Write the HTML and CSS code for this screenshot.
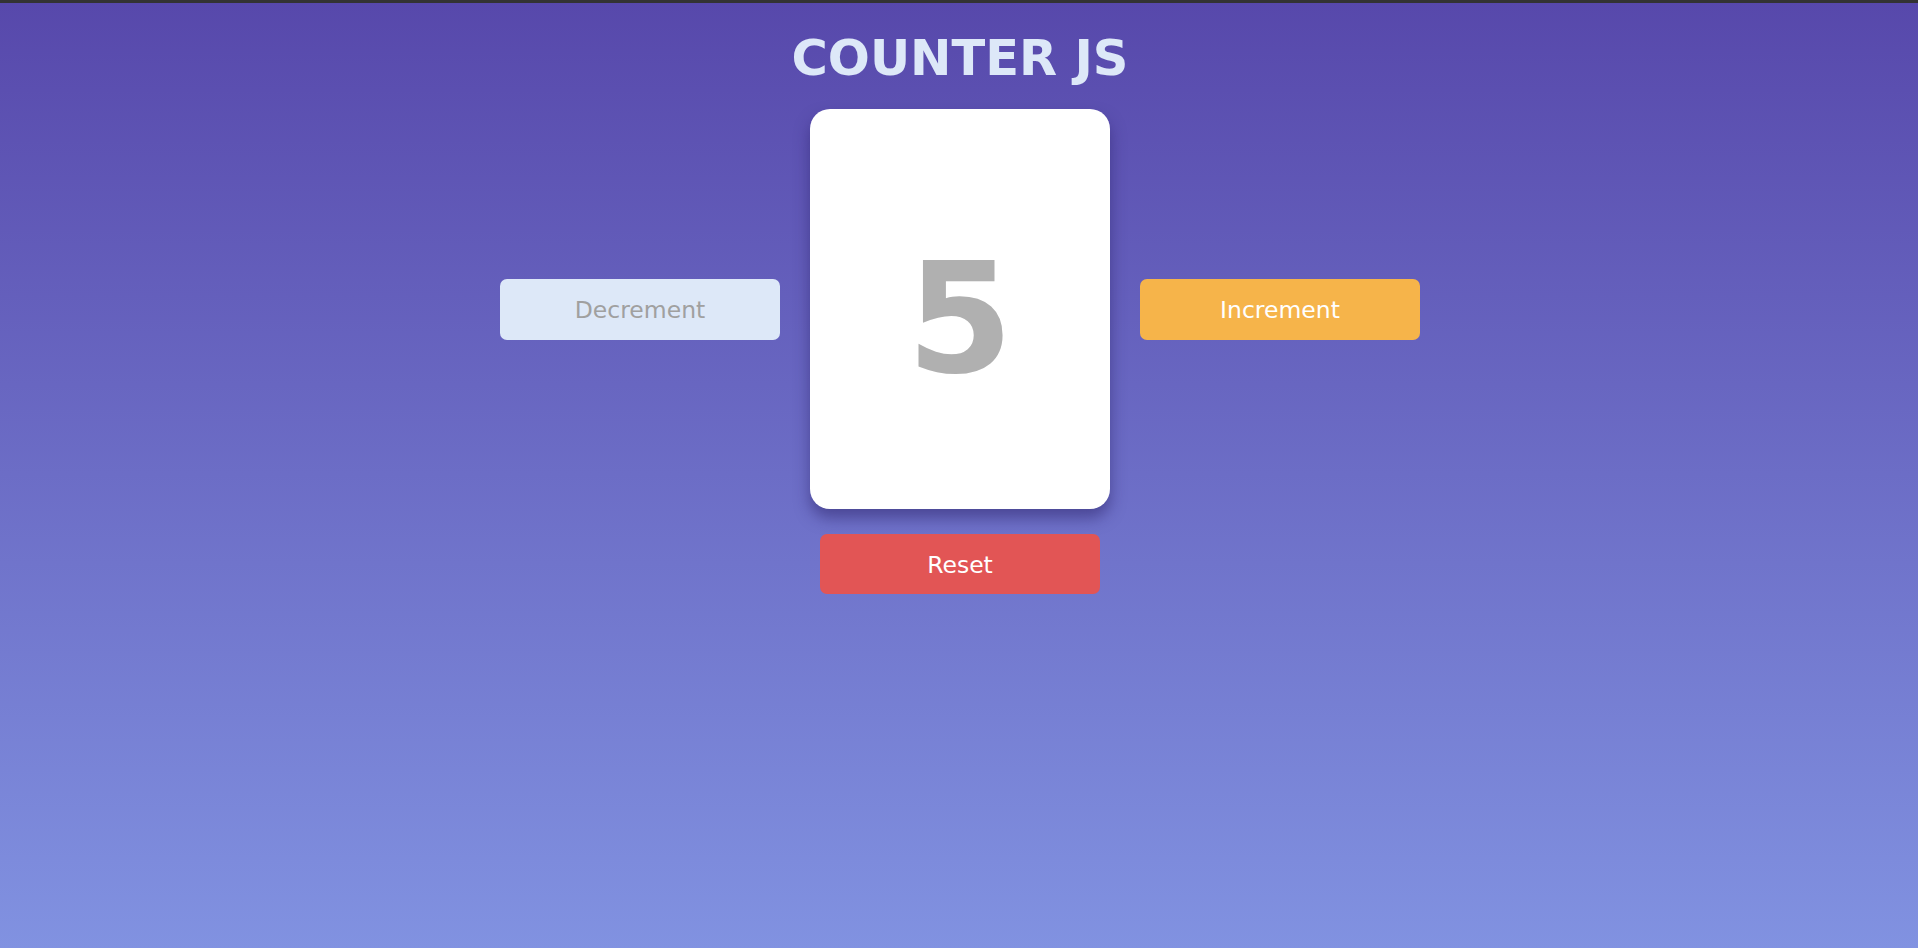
FILE: index.html
```html
<!DOCTYPE html>
<html lang="en">
<head>
<meta charset="utf-8">
<title>Counter JS</title>
<link rel="stylesheet" href="styles.css">
</head>
<body>
<div class="topbar"></div>
<main class="app">
  <h1 class="title">COUNTER JS</h1>
  <div class="row">
    <button class="btn btn-dec">Decrement</button>
    <div class="card"><span class="count">5</span></div>
    <button class="btn btn-inc">Increment</button>
  </div>
  <button class="btn btn-reset">Reset</button>
</main>
</body>
</html>
```

FILE: styles.css
```css
* { box-sizing: border-box; }
html, body { margin: 0; padding: 0; }
body {
  min-height: 100vh;
  font-family: Verdana, "DejaVu Sans", sans-serif;
  background: linear-gradient(to bottom, #5748ab 0%, #8192e1 100%);
}
.topbar {
  height: 3px;
  background: #333333;
}
.app {
  display: flex;
  flex-direction: column;
  align-items: center;
  padding-top: 27px;
  padding-left: 2px;
}
.title {
  margin: 0;
  font-size: 49.5px;
  line-height: 56px;
  font-weight: bold;
  color: #dde8f8;
}
.row {
  margin-top: 23px;
  display: flex;
  align-items: center;
  gap: 30px;
}
.card {
  width: 300px;
  height: 400px;
  background: #ffffff;
  border-radius: 20px;
  box-shadow: 0 9px 15px rgba(40, 30, 100, 0.5);
  display: flex;
  align-items: center;
  justify-content: center;
}
.count {
  font-size: 153px;
  font-weight: bold;
  color: #b0b0b0;
  line-height: 1;
  margin-top: 20px;
}
.btn {
  width: 280px;
  height: 61px;
  border: none;
  border-radius: 7px;
  padding: 2px 0 0;
  font-family: Verdana, "DejaVu Sans", sans-serif;
  font-size: 23.5px;
  cursor: pointer;
}
.btn-dec {
  background: #dde8f8;
  color: #a0a0a0;
}
.btn-inc {
  background: #f6b44a;
  color: #ffffff;
}
.btn-reset {
  margin-top: 25px;
  height: 60px;
  background: #e25555;
  color: #ffffff;
}
```
